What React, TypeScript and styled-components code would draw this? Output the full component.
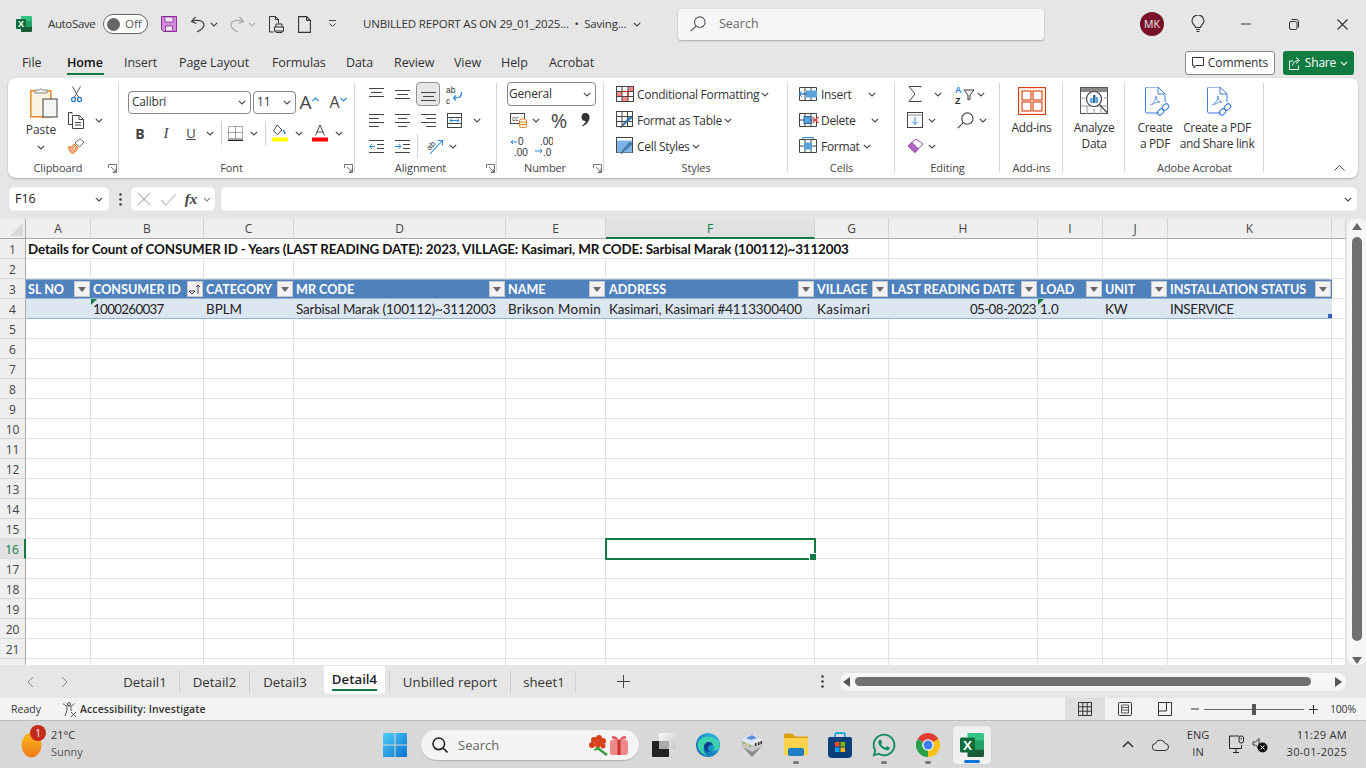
import React from "react";
import styled, { createGlobalStyle } from "styled-components";
import { FaWhatsapp } from "react-icons/fa";

const UI = `"Open Sans", "Noto Sans", sans-serif`;
const CELL = `Lato, "Open Sans", sans-serif`;

const Global = createGlobalStyle`
  html, body { margin: 0; padding: 0; background: #e6e6e6; overflow: hidden; }
  * { box-sizing: border-box; }
  svg { display: block; flex: none; }
`;

const Page = styled.div`
  width: 1366px; height: 768px; display: flex; flex-direction: column;
  background: #e6e6e6; font: 12px/16px ${UI}; color: #333; overflow: hidden;
`;

/* generic row slot for toolbar pieces */
const Slot = styled.div<{ $w: number; $l?: number }>`
  width: ${p => p.$w}px; margin-left: ${p => p.$l ?? 0}px; height: 100%;
  display: flex; align-items: center; justify-content: center; flex: none;
`;

/* ---------- title bar ---------- */
const TitleBar = styled.header`height: 48px; display: flex; align-items: center; padding-left: 16px; flex: none;`;
const AutoSave = styled.span`width: 48px; margin-left: 16px; flex: none; font-size: 11.5px; white-space: nowrap; letter-spacing: -0.35px;`;
const Toggle = styled.div`
  width: 45px; height: 20px; margin-left: 7px; border: 1.5px solid #666; border-radius: 10px; background: #fff;
  display: flex; align-items: center; padding-left: 3px; gap: 5px; font-size: 11.5px; color: #555; flex: none;
`;
const Knob = styled.i`width: 13px; height: 13px; border-radius: 50%; background: #666; display: block;`;
const DocTitle = styled.div`
  width: 265px; margin-left: 17px; flex: none; font-size: 11.5px; white-space: nowrap; overflow: hidden; letter-spacing: -0.18px; color: #333;
`;
const TitleSearch = styled.div`
  width: 366px; height: 31px; margin-left: 36px; background: #f6f6f6; border-radius: 3px; box-shadow: 0 1px 2px #aaa;
  display: flex; align-items: center; padding-left: 12px; gap: 13px; color: #666; font-size: 12.5px; flex: none;
`;
const Avatar = styled.div`
  width: 24px; height: 24px; border-radius: 50%; background: #7a0f2a; color: #eee; font-size: 10.5px; margin-left: 96px;
  display: flex; align-items: center; justify-content: center; flex: none;
`;

/* ---------- ribbon tabs ---------- */
const TabsRow = styled.nav`height: 30px; display: flex; align-items: center; padding-left: 22px; flex: none;`;
const RibbonTab = styled.span<{ $w: number; $active?: boolean }>`
  width: ${p => p.$w}px; height: 30px; line-height: 30px; flex: none; position: relative; white-space: nowrap; font-size: 12.5px; letter-spacing: -0.08px;
  color: ${p => (p.$active ? "#111" : "#333")}; font-weight: ${p => (p.$active ? 600 : 400)};
  &::after { content: ""; display: ${p => (p.$active ? "block" : "none")}; position: absolute; left: 0; top: 25px; width: 37px; height: 2px; background: #107c41; }
`;
const Comments = styled.div`
  width: 90px; height: 24px; margin-left: 590px; border: 1px solid #8a8a8a; border-radius: 3px; background: #fff;
  display: flex; align-items: center; justify-content: center; gap: 4px; font-size: 12px; letter-spacing: -0.1px; flex: none;
`;
const Share = styled.div`
  width: 71px; height: 24px; margin-left: 8px; border-radius: 3px; background: #107c41; color: #fff;
  display: flex; align-items: center; justify-content: center; gap: 4px; font-size: 12px; letter-spacing: -0.2px; flex: none;
`;

/* ---------- ribbon ---------- */
const Ribbon = styled.section`
  width: 1350px; height: 100px; margin-left: 8px; padding-top: 3px; background: #fff; border-radius: 8px;
  box-shadow: 0 1px 2px rgba(0,0,0,.25); display: flex; flex: none;
`;
const Group = styled.div<{ $w: number }>`
  width: ${p => p.$w}px; height: 95px; flex: none; display: flex; flex-direction: column; position: relative;
  &::after { content: ""; position: absolute; right: 0; top: 2px; bottom: 4px; width: 1px; background: #d4d4d4; }
`;
const GroupBody = styled.div<{ $pl?: number }>`flex: 1; min-height: 0; padding-left: ${p => p.$pl ?? 0}px; display: flex; flex-direction: column;`;
const GroupFoot = styled.div`height: 16px; display: flex; align-items: center; flex: none;`;
const LauncherSlot = styled.span`margin-right: 2px; flex: none;`;
const GroupLabel = styled.span`flex: 1; text-align: center; font-size: 11px; letter-spacing: -0.1px; color: #444; white-space: nowrap;`;
const ToolRow = styled.div<{ $h?: number }>`height: ${p => p.$h ?? 26}px; display: flex; align-items: center; flex: none;`;
const BodyRows = styled.div`display: flex; align-items: stretch; height: 78px;`;
const PasteCol = styled.div`width: 38px; margin-left: 14px; padding-top: 5px; display: flex; flex-direction: column; align-items: center; font-size: 12px; flex: none;`;
const PasteGlyph = styled.div`margin-left: 5px;`;
const PasteLabel = styled.span`margin-top: 4px; line-height: 16px;`;
const PasteChev = styled.div`margin-top: 7px;`;
const ColStack = styled.div`display: flex; flex-direction: column;`;
const Select = styled.div<{ $w: number; $h?: number; $l?: number; $pl?: number }>`
  width: ${p => p.$w}px; height: ${p => p.$h ?? 23}px; margin-left: ${p => p.$l ?? 0}px; border: 1px solid #8a8a8a; border-radius: 4px;
  display: flex; align-items: center; justify-content: space-between; padding: 0 4px 0 ${p => p.$pl ?? 3}px; font-size: 12px; color: #333; flex: none; background: #fff; letter-spacing: -0.2px;
`;
const Vert = styled.i`display: block; width: 1px; height: 24px; background: #d0d0d0;`;
const BoldGlyph = styled.span<{ $i?: boolean; $u?: boolean; $b?: boolean; $s?: number }>`
  font: ${p => (p.$i ? "italic " : "")}${p => (p.$b ? "bold " : "")}${p => p.$s ?? 14}px ${p => (p.$i ? `"Liberation Serif", serif` : UI)};
  text-decoration: ${p => (p.$u ? "underline" : "none")}; color: #444;
`;
const GrowRow = styled.div`display: flex; align-items: flex-start; height: 11px;`;
const PressedSlot = styled(Slot)`height: 24px; background: #e6e6e6; border: 1px solid #8f8f8f; border-radius: 4px;`;
const ToolText = styled.span<{ $w?: number; $l?: number }>`
  ${p => (p.$w ? `width: ${p.$w}px;` : "")} margin-left: ${p => p.$l ?? 0}px; padding-top: 2px; font-size: 12px; letter-spacing: -0.3px; white-space: nowrap; flex: none; color: #333;
`;
const BigTool = styled.div<{ $w: number }>`
  width: ${p => p.$w}px; flex: none; padding-top: 6px; display: flex; flex-direction: column; align-items: center; text-align: center; font-size: 12px; line-height: 16px; letter-spacing: -0.35px; color: #333; white-space: nowrap;
`;
const PdfGlyph = styled.div`margin-left: 6px;`;
const BigText = styled.span<{ $t?: number }>`margin-top: ${p => p.$t ?? 3}px;`;
const BigRow = styled.div`display: flex;`;
const Collapse = styled.div`margin-left: 70px; align-self: flex-end; margin-bottom: 7px;`;

/* ---------- formula bar ---------- */
const FormulaBar = styled.div`height: 24px; margin-top: 9px; display: flex; align-items: stretch; flex: none;`;
const FieldBox = styled.div<{ $w: number; $l: number }>`
  width: ${p => p.$w}px; margin-left: ${p => p.$l}px; background: #fff; border-radius: 4px; box-shadow: 0 0 1px #aaa;
  display: flex; align-items: center; flex: none; font-size: 12.5px; color: #222;
`;
const FormulaInput = styled(FieldBox)`justify-content: flex-end; padding-right: 5px;`;
const NameText = styled.span`flex: 1; padding-left: 6px;`;
const FxText = styled.span`font: italic bold 15px "Liberation Serif", serif; color: #444;`;

/* ---------- sheet ---------- */
const SheetWrap = styled.div`height: 446px; margin-top: 8px; display: flex; flex: none;`;
const Sheet = styled.div`
  width: 1346px; height: 446px; overflow: hidden; display: grid; background: #fff;
  grid-template-columns: 26px 65px 113px 90px 212px 100px 209px 74px 149px 65px 65px 164px 14px;
  grid-auto-rows: 20px; font: 13.4px/21px ${CELL}; color: #222; flex: none;
`;
const Corner = styled.div`
  background: #efefef; border-right: 1px solid #aaa; border-bottom: 1px solid #aaa; position: relative;
  &::after { content: ""; position: absolute; right: 2px; bottom: 2px; border-style: solid; border-width: 0 0 13px 13px; border-color: transparent transparent #d8d8d8 transparent; }
`;
const ColHead = styled.div<{ $sel?: boolean }>`
  background: ${p => (p.$sel ? "#e1e1e1" : "#efefef")}; color: ${p => (p.$sel ? "#107c41" : "#444")};
  border-right: 1px solid #d4d4d4; border-bottom: ${p => (p.$sel ? "2px solid #107c41" : "1px solid #aaa")};
  display: flex; align-items: center; justify-content: center; font: 12px ${UI};
`;
const RowHead = styled.div<{ $sel?: boolean }>`
  background: ${p => (p.$sel ? "#e1e1e1" : "#efefef")}; color: ${p => (p.$sel ? "#107c41" : "#444")};
  border-right: ${p => (p.$sel ? "2px solid #107c41" : "1px solid #aaa")}; border-bottom: 1px solid #d8d8d8; padding-top: 2px;
  display: flex; align-items: center; justify-content: center; font: 12px ${UI};
`;
const Cell = styled.div<{ $span?: number }>`
  ${p => (p.$span ? `grid-column: span ${p.$span};` : "")}
  border-right: 1px solid #e2e2e2; border-bottom: 1px solid #e2e2e2; padding: 0 2px; white-space: nowrap; position: relative;
`;
const TitleCell = styled(Cell)`font-weight: 700; letter-spacing: -0.12px; color: #111;`;
const Blank = styled(Cell)<{ $sel?: boolean }>`
  ${p => p.$sel ? `outline: 2px solid #107c41; outline-offset: -1px; z-index: 2;
    &::after { content: ""; position: absolute; right: -3px; bottom: -3px; width: 6px; height: 6px; background: #107c41; border: 1px solid #fff; }` : ""}
`;
const HeadCell = styled.div<{ $pl: number }>`
  background: #4f81bd; color: #fff; font-weight: 700; display: flex; align-items: center; justify-content: space-between; padding: 0 1px 0 ${p => p.$pl}px; white-space: nowrap;
  border-top: 1px solid #95b3d7; border-bottom: 1px solid #95b3d7; font-size: 12.6px;
`;
const FilterBtn = styled.span`
  width: 16px; height: 16px; background: #f2f2f2; border: 1px solid #c8c8c8; display: flex; align-items: center; justify-content: center; flex: none;
`;
const DataCell = styled.div<{ $right?: boolean; $flag?: boolean; $end?: boolean; $ls: number; $pl: number }>`
  background: #dce6f1; border-bottom: 1px solid #95b3d7; padding: 0 2px 0 ${p => p.$pl}px; white-space: nowrap; position: relative; text-align: ${p => (p.$right ? "right" : "left")}; color: #222;
  letter-spacing: ${p => p.$ls}px;
  ${p => p.$flag ? `&::before { content: ""; position: absolute; left: 0; top: 0; border-style: solid; border-width: 6px 6px 0 0; border-color: #107c41 transparent transparent transparent; }` : ""}
  ${p => p.$end ? `&::after { content: ""; position: absolute; right: 0; bottom: 0; width: 4px; height: 4px; background: #3b5fb5; }` : ""}
`;
const VScroll = styled.div`
  width: 20px; display: flex; flex-direction: column; align-items: center; background: #f6f6f6; border-radius: 8px; margin-left: 1px; padding: 4px 0; flex: none;
`;
const VThumb = styled.div`width: 10px; height: 404px; margin-top: 7px; background: #707070; border-radius: 5px; flex: none;`;
const VArrowEnd = styled.div`margin-top: 16px;`;

/* ---------- sheet tabs ---------- */
const TabBar = styled.div`height: 33px; display: flex; align-items: center; padding-left: 27px; flex: none;`;
const SheetTab = styled.span<{ $w: number; $sep?: boolean; $sepL?: boolean; $l?: number; $pl?: number }>`
  width: ${p => p.$w}px; margin-left: ${p => p.$l ?? 0}px; padding-left: ${p => p.$pl ?? 0}px; height: 22px; display: flex; align-items: center; justify-content: center; flex: none; white-space: nowrap; font-size: 13.2px; letter-spacing: 0.05px; color: #333;
  border-right: ${p => (p.$sep ? "1px solid #cfcfcf" : "0")}; border-left: ${p => (p.$sepL ? "1px solid #cfcfcf" : "0")};
`;
const ActiveTab = styled.span`
  width: 61px; height: 28px; margin: -3px 4px 0 4px; background: #fff; border-radius: 0 0 5px 5px; display: flex; flex-direction: column; align-items: center; justify-content: flex-start; flex: none;
  font-size: 13.2px; font-weight: 600; letter-spacing: 0.05px; color: #222; padding-top: 5px;
`;
const ActiveLine = styled.i`display: block; width: 45px; height: 2px; background: #107c41; margin-top: 2px;`;
const HScroll = styled.div`
  width: 506px; height: 18px; margin-left: 16px; background: #f6f6f6; border-radius: 8px; display: flex; align-items: center; padding: 0 3px; flex: none;
`;
const HThumb = styled.div`width: 456px; height: 9px; margin-left: 5px; background: #707070; border-radius: 5px; flex: none;`;
const HEnd = styled.div`margin-left: 24px;`;

/* ---------- status bar ---------- */
const StatusBar = styled.footer`height: 22px; background: #f3f3f3; display: flex; align-items: center; padding-left: 11px; font-size: 10.5px; flex: none; color: #333;`;
const Ready = styled.span`width: 51px; flex: none;`;
const A11y = styled.span`margin-left: 3px; width: 985px; font-weight: 600; letter-spacing: 0.1px; color: #333; flex: none;`;
const ViewBtn = styled.div<{ $on?: boolean }>`width: 40px; height: 22px; background: ${p => (p.$on ? "#dedede" : "transparent")}; display: flex; align-items: center; justify-content: center; flex: none;`;
const SliderTrack = styled.div`width: 100px; height: 1px; background: #666; display: flex; align-items: center; justify-content: center; flex: none;`;
const SliderThumb = styled.i`width: 4px; height: 11px; background: #555; display: block;`;
const Percent = styled.span`margin-left: 12px; font-size: 10.5px; letter-spacing: -0.2px;`;

/* ---------- taskbar ---------- */
const Taskbar = styled.div`height: 48px; background: #d8d8d8; border-top: 1px solid #bcbcbc; display: flex; align-items: center; padding-left: 21px; flex: none;`;
const Weather = styled.div`width: 30px; height: 30px; position: relative; flex: none; display: flex; align-items: center;`;
const Badge = styled.span`
  position: absolute; left: 9px; top: -5px; width: 16px; height: 16px; border-radius: 50%; background: #c42b1c; color: #fff; font-size: 10px; line-height: 16px; text-align: center;
`;
const WeatherText = styled.div`width: 332px; font-size: 11px; line-height: 17px; color: #333; flex: none; padding-bottom: 4px;`;
const WeatherSub = styled.div`color: #555;`;
const WinSearch = styled.div`
  width: 218px; height: 30px; margin-left: 14px; background: #f4f4f4; border-radius: 15px; box-shadow: 0 1px 1px #b0b0b0;
  display: flex; align-items: center; padding: 0 9px 0 11px; gap: 10px; font-size: 13px; color: #666; flex: none;
`;
const SearchGrow = styled.span`flex: 1;`;
const TaskIcon = styled.div<{ $dot?: boolean; $active?: boolean; $l?: number }>`
  width: ${p => (p.$active ? 38 : 44)}px; height: 38px; margin: ${p => (p.$active ? "0 3px" : `0 0 0 ${p.$l ?? 0}px`)}; flex: none; position: relative; display: flex; align-items: center; justify-content: center;
  ${p => p.$active ? "background:#f0f0f0; border-radius:4px; box-shadow: 0 0 1px #bbb;" : ""}
  ${p => p.$dot ? `&::after { content: ""; position: absolute; left: 50%; margin-left: -3px; bottom: 0; width: 6px; height: 3px; border-radius: 2px; background: #777; }` : ""}
  ${p => p.$active ? `&::after { content: ""; position: absolute; left: 50%; margin-left: -8px; bottom: 1px; width: 16px; height: 3px; border-radius: 2px; background: #0a74d4; }` : ""}
`;
const TrayText = styled.div`width: 30px; text-align: center; font-size: 11px; line-height: 17px; flex: none; margin-left: 14px; color: #333; padding-bottom: 3px;`;
const Clock = styled.div`width: 73px; margin-left: 6px; text-align: right; font-size: 11px; line-height: 17px; flex: none; color: #333; letter-spacing: 0.3px; padding-bottom: 4px;`;

/* ---------- icons ---------- */
const Chev = ({ c = "#444" }: { c?: string }) => (
  <svg width="8" height="5" viewBox="0 0 8 5"><path d="M.8.8 4 4 7.2.8" fill="none" stroke={c} strokeWidth="1.1" /></svg>
);
const Launcher = () => (
  <svg width="9" height="9" viewBox="0 0 9 9"><path d="M.5 4V.5h8v8H5M3 3l5 5M8 4.5V8H4.5" fill="none" stroke="#666" strokeWidth=".9" /></svg>
);
const XlLogo = ({ s = 16 }: { s?: number }) => (
  <svg width={s} height={s} viewBox="0 0 16 16">
    <path d="M5 0h10a1 1 0 0 1 1 1v4H5z" fill="#33c481" /><path d="M5 5h11v6H5z" fill="#107c41" /><path d="M10 5h6v6h-6z" fill="#21a366" />
    <path d="M5 11h11v4a1 1 0 0 1-1 1H5z" fill="#185c37" />
    <rect x="0" y="3" width="10" height="10" rx="1" fill="#0f6b3a" />
    <text x="5" y="11.3" textAnchor="middle" fontFamily="Liberation Sans" fontWeight="700" fontSize="9" fill="#fff">X</text>
  </svg>
);
const SaveIcon = () => (
  <svg width="16" height="16" viewBox="0 0 16 16">
    <path d="M.5.5h15v15H2.5l-2-2z" fill="#cf8fd8" stroke="#8a2e9a" /><rect x="4" y="1" width="8" height="5" fill="#f5e8f7" stroke="#8a2e9a" strokeWidth=".8" /><rect x="4.5" y="10" width="7" height="5" fill="#f5e8f7" stroke="#8a2e9a" strokeWidth=".8" />
  </svg>
);
const Undo = ({ c, flip }: { c: string; flip?: boolean }) => (
  <svg width="16" height="17" viewBox="0 0 16 17">
    <g transform={flip ? "translate(16 0) scale(-1 1)" : undefined}>
      <path d="M5.5 1 1.5 5.5l5 2M1.8 5.5C6 3.5 14 4 14 9c0 3-3 5-7 7" fill="none" stroke={c} strokeWidth="1.2" />
    </g>
  </svg>
);
const PrintPrev = () => (
  <svg width="15" height="17" viewBox="0 0 15 17" fill="none" stroke="#333" strokeWidth="1"><path d="M.5.5h6l3 3v4M6.5.5v3h3M.5.5v15.5h4" /><rect x="5.5" y="11" width="9" height="4" /><path d="M7 11V8h6v3M7 15v1.5h6V15" /></svg>
);
const NewDoc = () => (
  <svg width="13" height="17" viewBox="0 0 13 17" fill="none" stroke="#333" strokeWidth="1.1"><path d="M.6.6h8l3.8 3.8v12H.6zM8.6.6v3.8h3.8" /></svg>
);
const Customize = () => (
  <svg width="9" height="8" viewBox="0 0 9 8" fill="none" stroke="#444"><path d="M1 .5h7M1.5 3.5 4.5 6.5 7.5 3.5" /></svg>
);
const Magnifier = ({ s = 16, c = "#555" }: { s?: number; c?: string }) => (
  <svg width={s} height={s} viewBox="0 0 16 16" fill="none" stroke={c} strokeWidth="1.1"><circle cx="9.8" cy="6.2" r="5.3" /><path d="M6 10 .8 15.2" /></svg>
);
const Bulb = () => (
  <svg width="14" height="18" viewBox="0 0 14 18" fill="none" stroke="#333" strokeWidth="1.1"><path d="M4.5 12.5C4.5 10 1 9 1 6a6 6 0 0 1 12 0c0 3-3.500 4-3.500 6.500zM5 14.500h4M5.500 16.500h3" /></svg>
);
const WinMin = () => <svg width="10" height="2" viewBox="0 0 10 2"><path d="M0 1h10" stroke="#333" /></svg>;
const WinRestore = () => <svg width="10" height="11" viewBox="0 0 10 11" fill="none" stroke="#333"><rect x=".5" y="2.500" width="7.500" height="8" rx="1.500" /><path d="M2.500.5h5A2 2 0 0 1 9.500 2.500v6" /></svg>;
const WinClose = () => <svg width="11" height="11" viewBox="0 0 11 11" stroke="#333" strokeWidth="1.100"><path d="m.5.5 10 10M10.500.5l-10 10" /></svg>;
const CommentIco = () => <svg width="12" height="12" viewBox="0 0 12 12" fill="none" stroke="#333"><path d="M.5.5h11v8H4L2 11V8.500H.5z" /></svg>;
const ShareIco = () => <svg width="12" height="13" viewBox="0 0 12 13" fill="none" stroke="#fff"><path d="M4 4H.5v8.500h9V8.500M3.500 8.500C4 5.500 6.500 3.500 9 3.500M7 .5l3.500 3L7 6.500" /></svg>;

const PasteIco = () => (
  <svg width="28" height="32" viewBox="0 0 28 32">
    <rect x=".8" y="4.800" width="20" height="26" fill="#fdf3e2" stroke="#e8912d" strokeWidth="1.600" />
    <path d="M5 7V4h4a2.500 2.500 0 0 1 4 0h4v3z" fill="#f2f2f2" stroke="#888" />
    <rect x="13" y="13" width="14" height="18" fill="#f5f5f5" stroke="#444" />
  </svg>
);
const CutIco = () => (
  <svg width="11" height="17" viewBox="0 0 11 17" fill="none"><path d="M1.500.5 7.500 11M9.500.5 3.500 11" stroke="#555" /><circle cx="2.500" cy="13.500" r="2" stroke="#2a7cc7" strokeWidth="1.300" /><circle cx="8.500" cy="13.500" r="2" stroke="#2a7cc7" strokeWidth="1.300" /></svg>
);
const CopyIco = () => (
  <svg width="16" height="17" viewBox="0 0 16 17" fill="none" stroke="#444"><path d="M4 2V.5H.5v12H4" /><path d="M4.500 3.500h7l4 4v9h-11zM11 3.500v4h4.500M7 10.500h6M7 13h6" /></svg>
);
const PainterIco = () => (
  <svg width="18" height="16" viewBox="0 0 18 16"><path d="M1 9c3 .5 5-1 6-3l4 4c-1.500 3-4 5-6 5.500-.5-1-1-1.500-2-2-.5-1.500-1-3-2-4.500z" fill="#f4b183" stroke="#e07a1f" /><path d="m8 5 5-4.500 4 3.500-4.500 5z" fill="#fff" stroke="#666" /></svg>
);
const Caret = ({ down, c = "#2b88d8" }: { down?: boolean; c?: string }) => (
  <svg width="7" height="5" viewBox="0 0 7 5" fill="none" stroke={c} strokeWidth="1.200"><path d={down ? "M.5 1l3 3 3-3" : "M.5 4l3-3 3 3"} /></svg>
);
const BorderIco = () => (
  <svg width="15" height="15" viewBox="0 0 15 15" fill="none" stroke="#555"><path d="M.5.5h14v12H.5z" strokeDasharray="1 1" /><path d="M7.500.5v12M.5 6.500h14" strokeDasharray="1 1" /><path d="M0 14.300h15" stroke="#111" strokeWidth="1.300" /></svg>
);
const FillIco = () => (
  <svg width="16" height="18" viewBox="0 0 16 18"><path d="M5 1 1.500 7l4 3.500L10 6z" fill="none" stroke="#444" /><path d="M11 6c1.500 1 2 2.500 1.500 4" fill="none" stroke="#2b88d8" strokeWidth="1.500" /><rect y="13.500" width="16" height="4" fill="#ffff00" /></svg>
);
const FontColorIco = () => (
  <svg width="16" height="18" viewBox="0 0 16 18"><path d="M3.500 11.500 8 1l4.500 10.500M5 8h6" fill="none" stroke="#444" /><rect y="13.500" width="16" height="4" fill="#f00" /></svg>
);
const Lines = ({ rows }: { rows: [number, number, number][] }) => (
  <svg width="15" height="15" viewBox="0 0 15 15" stroke="#444">
    {rows.map((r, i) => <path key={i} d={`M${r[0]} ${r[2]}.5H${r[1]}`} />)}
  </svg>
);
const WrapIco = () => (
  <svg width="18" height="21" viewBox="0 0 18 21"><text x="1" y="9" fontFamily="Liberation Sans" fontSize="8.500" fill="#333">ab</text><text x="1" y="19.500" fontFamily="Liberation Sans" fontSize="8.500" fill="#333">c</text><path d="M16.500 8c0 6-3 6-8 6M11 11.500 8.500 14l2.500 2.500" fill="none" stroke="#2b88d8" strokeWidth="1.200" /></svg>
);
const MergeIco = () => (
  <svg width="15" height="15" viewBox="0 0 15 15" fill="none"><rect x=".5" y=".5" width="14" height="14" stroke="#444" /><path d="M.5 4.500h14M.5 10.500h14" stroke="#444" /><path d="M3 7.500h9M5 5.500l-2 2 2 2M10 5.500l2 2-2 2" stroke="#2b88d8" /></svg>
);
const Indent = ({ out }: { out?: boolean }) => (
  <svg width="15" height="13" viewBox="0 0 15 13" fill="none"><path d="M0 .5h15M8 4.500h7M8 8.500h7M0 12.500h15" stroke="#444" /><path d={out ? "M6 6.500H.8M3 4 .8 6.500 3 9" : "M0 6.500h5.500M3.500 4 6 6.500 3.500 9"} stroke="#2b88d8" /></svg>
);
const OrientIco = () => (
  <svg width="22" height="20" viewBox="0 0 22 20"><text x="2" y="12" transform="rotate(-45 7 9)" fontFamily="Liberation Sans" fontSize="8" fill="#333">ab</text><path d="M6 18 18 5M13.500 4.500H18.500V9.500" fill="none" stroke="#2b88d8" strokeWidth="1.100" /></svg>
);
const CurrencyIco = () => (
  <svg width="17" height="15" viewBox="0 0 17 15"><rect x=".5" y=".5" width="14" height="10" fill="#fff" stroke="#444" /><text x="2" y="8" fontFamily="Liberation Sans" fontSize="6.500" fill="#333">cc</text><rect x="9.500" y="6" width="7" height="8.500" rx="2" fill="#fff" stroke="#e07a1f" /><path d="M9.500 9h7M9.500 11.500h7" stroke="#e07a1f" /></svg>
);
const CommaIco = () => (
  <svg width="9" height="14" viewBox="0 0 9 14"><path d="M4 0c3 0 5 2 4.500 5C8 9 5 12 1.500 13.500l-.5-.8C3 11 4.500 9.500 4.500 8 2 8 .5 6.500.5 4S2 0 4 0z" fill="#333" /></svg>
);
const DecPlaces = ({ more }: { more?: boolean }) => (
  <svg width="20" height="21" viewBox="0 0 20 21"><text x={more ? 7 : 10} y="9" fontFamily="Liberation Sans" fontSize="10" fill="#333">{more ? ".00" : "0"}</text><text x={more ? 10 : 6} y="20" fontFamily="Liberation Sans" fontSize="10" fill="#333">{more ? ".0" : ".00"}</text><path d={more ? "M2 15h7M7 13l2 2-2 2" : "M3 6h6M5 4 3 6l2 2"} fill="none" stroke="#2b88d8" /></svg>
);
const CondIco = () => (
  <svg width="18" height="16" viewBox="0 0 18 16" fill="none"><rect x=".5" y=".5" width="17" height="15" stroke="#444" /><rect x="6" y="1" width="6" height="4.500" fill="#fff" /><rect x="12" y="1" width="5" height="4.500" fill="#f88" /><rect x="6" y="10" width="6" height="5" fill="#f88" /><rect x="1" y="5.500" width="5" height="4.500" fill="#f88" /><path d="M6 .5v15M12 .5v15M.5 5.500h17M.5 10.500h17" stroke="#444" /><path d="M6 5.500h6v5" stroke="#e00" /></svg>
);
const TableIco = ({ fill }: { fill?: boolean }) => (
  <svg width="18" height="18" viewBox="0 0 18 18" fill="none"><rect x=".5" y=".5" width="16" height="15" stroke="#444" />{fill ? <rect x="1" y="3.500" width="15" height="12" fill="#7db5e6" /> : <path d="M.5 5.500h16M.5 10.500h16M6 .5v15M11.500 .5v15" stroke="#444" />}<path d="m5 17 2-4 7-8 2 2-8 7z" fill="#2b88d8" stroke="#555" strokeWidth=".7" /></svg>
);
const CellGridIco = ({ kind }: { kind: "insert" | "delete" | "format" }) => (
  <svg width="22" height="18" viewBox="0 0 22 18" fill="none">
    <path d="M1.500 2.500h17v13h-17zM1.500 9h17M7 2.500v13M13 2.500v13" stroke="#444" />
    {kind === "insert" && <><rect x="8" y="5.500" width="11" height="7" fill="#5ba3dd" /><path d="M9 9H1M4 6 1 9l3 3" stroke="#2b88d8" fill="none" /></>}
    {kind === "delete" && <><rect x="6" y="5.500" width="7" height="7" fill="#5ba3dd" stroke="#2b6ca8" /><path d="m14.500 6 6 6M20.500 6l-6 6" stroke="#e44" strokeWidth="1.300" /></>}
    {kind === "format" && <><rect x="6" y="5.500" width="8" height="7" fill="#5ba3dd" /><path d="M5 .5h10M5 0v2M15 0v2" stroke="#2b88d8" /></>}
  </svg>
);
const SigmaIco = () => <svg width="14" height="16" viewBox="0 0 14 16" fill="none" stroke="#444"><path d="M13 1.500V.5H1l6 7.500-6 7.500h12v-1" /></svg>;
const SortIco = () => (
  <svg width="20" height="21" viewBox="0 0 20 21"><text x="0" y="9" fontFamily="Liberation Sans" fontWeight="700" fontSize="9" fill="#2b88d8">A</text><text x="0" y="19.500" fontFamily="Liberation Sans" fontWeight="700" fontSize="9" fill="#333">Z</text><path d="M9 6h10l-4 5v4l-2 1v-5z" fill="none" stroke="#333" /></svg>
);
const FillDown = () => <svg width="16" height="16" viewBox="0 0 16 16" fill="none"><rect x=".5" y=".5" width="15" height="15" stroke="#444" /><path d="M.5 3h15" stroke="#888" /><path d="M8 5v7M5 9.500 8 12.500l3-3" stroke="#2b88d8" /></svg>;
const Eraser = () => <svg width="17" height="16" viewBox="0 0 17 16"><path d="M1 8 9 1l7 5-8 8.500z" fill="#fff" stroke="#9c4fb0" /><path d="M1 8l4-3.500 6 6L8 14.500z" fill="#b565c8" stroke="#9c4fb0" /></svg>;
const AddinsIco = () => (
  <svg width="28" height="28" viewBox="0 0 28 28" fill="none" stroke="#d83b01" strokeWidth="1.100"><rect x=".6" y=".6" width="26.800" height="26.800" /><rect x="4" y="4" width="9" height="9" /><rect x="15" y="4" width="9" height="9" /><rect x="4" y="15" width="9" height="9" /><rect x="15" y="15" width="9" height="9" /></svg>
);
const AnalyzeIco = () => (
  <svg width="29" height="28" viewBox="0 0 29 28" fill="none">
    <rect x=".5" y=".5" width="27" height="26" stroke="#555" /><rect x="1" y="1" width="26" height="4" fill="#8a8a8a" />
    <path d="M.5 11h5M.5 19h27M7 19v8M14 22v5M21 19v8M24 11h4" stroke="#999" />
    <circle cx="14" cy="12" r="7.500" fill="#fff" stroke="#444" strokeWidth="1.200" /><path d="m19.500 17.500 8 8.500" stroke="#555" strokeWidth="1.400" />
    <rect x="10" y="11" width="2.500" height="5" fill="#5ba3dd" /><rect x="13" y="8" width="2.500" height="8" fill="#2b6ca8" /><rect x="16" y="10" width="2" height="6" fill="#5ba3dd" />
  </svg>
);
const PdfIco = () => (
  <svg width="26" height="30" viewBox="0 0 26 30" fill="none" stroke="#3b7ddd" strokeWidth="1"><path d="M14 26H2a1.500 1.500 0 0 1-1.500-1.500v-23A1.500 1.500 0 0 1 2 0h11l7 7v8M13 0v7h7" /><path d="M5 18c3-1 6-5 6-9 0 3 2 6 4 6-3 0-6 1-8 3" strokeWidth=".8" /><rect x="12" y="22.500" width="7" height="5" rx="2.500" transform="rotate(-45 15.500 25)" /><rect x="17" y="17.500" width="7" height="5" rx="2.500" transform="rotate(-45 20.500 20)" /></svg>
);
const TriV = ({ up }: { up?: boolean }) => (
  <svg width="10" height="7" viewBox="0 0 10 7"><path d={up ? "M5 0l5 7H0z" : "M0 0h10L5 7z"} fill="#666" /></svg>
);
const TriH = ({ left }: { left?: boolean }) => (
  <svg width="7" height="10" viewBox="0 0 7 10"><path d={left ? "M7 0v10L0 5z" : "M0 0l7 5-7 5z"} fill="#555" /></svg>
);
const NavArrow = ({ left }: { left?: boolean }) => (
  <svg width="7" height="12" viewBox="0 0 7 12" fill="none" stroke="#888"><path d={left ? "M6 1 1 6l5 5" : "M1 1l5 5-5 5"} /></svg>
);
const Dots = ({ c = "#333" }: { c?: string }) => (
  <svg width="3" height="13" viewBox="0 0 3 13" fill={c}><circle cx="1.500" cy="1.500" r="1.200" /><circle cx="1.500" cy="6.500" r="1.200" /><circle cx="1.500" cy="11.500" r="1.200" /></svg>
);
const XMark = () => <svg width="16" height="16" viewBox="0 0 16 16" stroke="#bbb" strokeWidth="1.100"><path d="m2 2 12 12M14 2 2 14" /></svg>;
const Check = () => <svg width="17" height="13" viewBox="0 0 17 13" fill="none" stroke="#bbb" strokeWidth="1.100"><path d="m1 7 5 5L16 1" /></svg>;
const Plus = () => <svg width="13" height="13" viewBox="0 0 13 13" stroke="#444"><path d="M6.500 0v13M0 6.500h13" /></svg>;
const A11yIco = () => (
  <svg width="15" height="15" viewBox="0 0 15 15" fill="none" stroke="#444" strokeWidth=".9"><circle cx="7" cy="2" r="1.500" /><path d="M1 1.500c2 2 3 2.500 6 2.500s3.500-.5 5.500-2.500M5 4.500V8l-2 6M9 4.500V8l.5 1" /><path d="m9 10 5 5M14 10l-5 5" /></svg>
);
const GridView = () => <svg width="14" height="14" viewBox="0 0 14 14" fill="none" stroke="#333"><path d="M.5.5h13v13H.5zM.5 4.800h13M.5 9.200h13M4.800.5v13M9.200.5v13" /></svg>;
const PageView = () => <svg width="14" height="14" viewBox="0 0 14 14" fill="none" stroke="#333"><rect x=".5" y=".5" width="13" height="13" rx="1" /><path d="M3.500 3h7v8h-7zM3.500 5.500h7M3.500 8h7" strokeWidth=".8" /></svg>;
const BreakView = () => <svg width="14" height="14" viewBox="0 0 14 14" fill="none" stroke="#333"><path d="M.5.5h13v13H.5zM.5 9h8V.5" /></svg>;
const Minus = () => <svg width="8" height="2" viewBox="0 0 8 2"><path d="M0 1h8" stroke="#333" /></svg>;
const PlusSm = () => <svg width="9" height="9" viewBox="0 0 9 9" stroke="#333"><path d="M4.500 0v9M0 4.500h9" /></svg>;

const SunIco = () => (
  <svg width="21" height="26" viewBox="0 0 21 26"><defs><linearGradient id="sun" x1="0" y1="0" x2="0" y2="1"><stop offset="0" stopColor="#f8b81c" /><stop offset="1" stopColor="#ef7a1a" /></linearGradient></defs><ellipse cx="10.500" cy="13" rx="10" ry="12.500" fill="url(#sun)" /></svg>
);
const WinLogo = () => (
  <svg width="24" height="24" viewBox="0 0 24 24"><defs><linearGradient id="win" x1="0" y1="0" x2="1" y2="1"><stop offset="0" stopColor="#4fd1f8" /><stop offset="1" stopColor="#0a6fd0" /></linearGradient></defs><path d="M0 1a1 1 0 0 1 1-1h10.500v11.500H0zM12.500 0H23a1 1 0 0 1 1 1v10.500H12.500zM0 12.500h11.500V24H1a1 1 0 0 1-1-1zM12.500 12.500H24V23a1 1 0 0 1-1 1H12.500z" fill="url(#win)" /></svg>
);
const SearchDark = () => <svg width="16" height="16" viewBox="0 0 16 16" fill="none" stroke="#222" strokeWidth="1.600"><circle cx="6.800" cy="6.800" r="5.800" /><path d="m11 11 4.500 4.500" /></svg>;
const Gift = () => (
  <svg width="42" height="22" viewBox="0 0 42 22">
    <path d="M8 13 19 21" stroke="#3e9a3a" strokeWidth="2.500" /><path d="M6 16l6-2" stroke="#3e9a3a" strokeWidth="1.500" />
    <g fill="#d9401a"><circle cx="6" cy="6" r="3" /><circle cx="11" cy="4" r="3" /><circle cx="15" cy="7" r="3" /><circle cx="4" cy="11" r="3" /><circle cx="10" cy="10" r="3.200" /><circle cx="15" cy="12" r="2.500" /></g>
    <rect x="22" y="6" width="18" height="15" rx="2" fill="#ef8a8a" /><rect x="29.500" y="6" width="3" height="15" fill="#c9302c" /><path d="M31 6c-3-5-8-5-7-2 .5 1.500 4 2 7 2zM31 6c3-5 8-5 7-2-.5 1.500-4 2-7 2z" fill="#e05a5a" />
  </svg>
);
const TaskView = () => (
  <svg width="24" height="24" viewBox="0 0 24 24"><defs><linearGradient id="tv" x1="0" y1="0" x2="1" y2="1"><stop offset="0" stopColor="#fafafa" /><stop offset="1" stopColor="#c8c8c8" /></linearGradient></defs><rect x="0" y="8" width="17" height="16" rx="1" fill="#222" /><rect x="7" y="0" width="17" height="16" rx="1" fill="url(#tv)" /><path d="M7 8h10v8H7z" fill="#aaa" /></svg>
);
const Edge = () => (
  <svg width="24" height="24" viewBox="0 0 24 24"><defs><linearGradient id="ed" x1="0" y1="1" x2="1" y2="0"><stop offset="0" stopColor="#0b5aa8" /><stop offset="1" stopColor="#2ec4e8" /></linearGradient></defs><circle cx="12" cy="12" r="12" fill="url(#ed)" /><path d="M2 9c3-6 13-8 19-2 2 2 3 5 2 8-1 2-5 3-8 2 3 0 4-2 3-4-2-3-8-3-10 1-1 3 0 7 4 9-6-1-12-7-10-14z" fill="#3fd0b0" /><path d="M13 9c-3 0-5 2-5 5 0 3 3 5 6 5-2-1-3-3-2-5 .5-2 3-2 5-2-1-2-2-3-4-3z" fill="#0b3f8c" /></svg>
);
const RemoteIco = () => (
  <svg width="24" height="24" viewBox="0 0 24 24"><path d="M12 17 1 12l11 12 11-12z" fill="#8a8a8a" /><path d="M1 7v6l11 6 11-6V7L12 12z" fill="#c8c8c8" /><path d="M1 7l11-6 11 6-11 5z" fill="#dfe7f2" /><path d="M6 5l6-3 5 3-6 2z" fill="#5b8fd8" /><g fill="#333"><rect x="15" y="10" width="1.500" height="3" /><rect x="18" y="9" width="1.500" height="3" /><rect x="20.500" y="8" width="1.500" height="3" /></g><g fill="#6ab04c"><circle cx="4" cy="10" r="1" /></g><circle cx="7" cy="11.500" r="1" fill="#f1c40f" /><circle cx="10" cy="13" r="1" fill="#6ab04c" /></svg>
);
const Folder = () => (
  <svg width="24" height="23" viewBox="0 0 24 23"><path d="M0 2a1.500 1.500 0 0 1 1.500-1.500H8l3 3h13V6H0z" fill="#d9a20c" /><path d="M0 5h24v16a1.500 1.500 0 0 1-1.500 1.500h-21A1.500 1.500 0 0 1 0 21z" fill="#fbd34e" /><rect x="4" y="15" width="16" height="8" rx="2" fill="#1f7fc4" /></svg>
);
const Store = () => (
  <svg width="24" height="26" viewBox="0 0 24 26"><path d="M7 6V3a2 2 0 0 1 2-2h6a2 2 0 0 1 2 2v3" fill="none" stroke="#1ea7e0" strokeWidth="1.800" /><path d="M0 7a2 2 0 0 1 2-2h20a2 2 0 0 1 2 2v15a4 4 0 0 1-4 4H4a4 4 0 0 1-4-4z" fill="#0c3f7a" /><rect x="7" y="10" width="4.500" height="4.500" fill="#f25022" /><rect x="12.500" y="10" width="4.500" height="4.500" fill="#7fba00" /><rect x="7" y="15.500" width="4.500" height="4.500" fill="#00a4ef" /><rect x="12.500" y="15.500" width="4.500" height="4.500" fill="#ffb900" /></svg>
);
const Chrome = () => (
  <svg width="24" height="24" viewBox="0 0 24 24"><path d="M12 12 1.600 6A12 12 0 0 1 22.400 6z" fill="#e33b2e" /><path d="M12 12 22.400 6A12 12 0 0 1 12 24z" fill="#fbc116" /><path d="M12 12V24A12 12 0 0 1 1.600 6z" fill="#2aa24a" /><circle cx="12" cy="12" r="5.800" fill="#fff" /><circle cx="12" cy="12" r="4.500" fill="#3d7ff0" /></svg>
);
const Up = () => <svg width="12" height="7" viewBox="0 0 12 7" fill="none" stroke="#222" strokeWidth="1.300"><path d="m1 6 5-5 5 5" /></svg>;
const CloudIco = () => <svg width="17" height="13" viewBox="0 0 17 13"><path d="M4 12.500a3.500 3.500 0 0 1-.5-7 5 5 0 0 1 9.500 0 3.500 3.500 0 0 1 0 7z" fill="#dedede" stroke="#333" /></svg>;
const NetIco = () => <svg width="16" height="19" viewBox="0 0 16 19" fill="none" stroke="#222"><path d="M10 1H.5v12.500h12V10M4 17.500h6M7 14v3.500" /><rect x="10" y="1" width="4.500" height="7" rx="2" /><path d="M12.200 3v1.500" /></svg>;
const SoundIco = () => <svg width="16" height="16" viewBox="0 0 16 16"><path d="M1 5h2.500L7 1.500v10L3.500 8H1z" fill="none" stroke="#333" /><circle cx="10.500" cy="10.500" r="5" fill="#111" /><path d="m8.500 8.500 4 4M12.500 8.500l-4 4" stroke="#fff" /></svg>;
const Funnel = () => <svg width="8" height="5" viewBox="0 0 8 5"><path d="M0 0h8L4 5z" fill="#666" /></svg>;
const SortFilter = () => <svg width="12" height="11" viewBox="0 0 12 11" fill="none" stroke="#444"><path d="M0 7h6L3 10zM9 10V1M7 3l2-2 2 2" /></svg>;

/* ---------- data ---------- */
const COLS = ["A", "B", "C", "D", "E", "F", "G", "H", "I", "J", "K"];
const HEADS = ["SL NO", "CONSUMER ID", "CATEGORY", "MR CODE", "NAME", "ADDRESS", "VILLAGE", "LAST READING DATE", "LOAD", "UNIT", "INSTALLATION STATUS"];
const DATA = ["", "1000260037", "BPLM", "Sarbisal Marak (100112)~3112003", "Brikson Momin", "Kasimari, Kasimari #4113300400", "Kasimari", "05-08-2023", "1.0", "KW", "INSERVICE"];
const DATA_SPACING = [0, -0.7, 0, -0.16, 0.3, -0.1, 0.37, -0.6, 0, 0, -0.33];
const TITLE = "Details for Count of CONSUMER ID - Years (LAST READING DATE): 2023, VILLAGE: Kasimari, MR CODE: Sarbisal Marak (100112)~3112003";
const RIBBON_TABS: [string, number][] = [["File", 45], ["Home", 57], ["Insert", 55], ["Page Layout", 93], ["Formulas", 74], ["Data", 48], ["Review", 60], ["View", 47], ["Help", 48]];

const top: [number, number, number][] = [[0, 15, 1], [2, 13, 5], [0, 15, 9]];
const mid: [number, number, number][] = [[0, 15, 3], [2, 13, 7], [0, 15, 11]];
const bot: [number, number, number][] = [[0, 15, 5], [2, 13, 9], [0, 15, 13]];
const left: [number, number, number][] = [[0, 15, 1], [0, 10, 5], [0, 15, 9], [0, 10, 13]];
const center: [number, number, number][] = [[0, 15, 1], [3, 12, 5], [0, 15, 9], [3, 12, 13]];
const right: [number, number, number][] = [[0, 15, 1], [5, 15, 5], [0, 15, 9], [5, 15, 13]];

const Foot = ({ label, launch }: { label: string; launch?: boolean }) => (
  <GroupFoot><GroupLabel>{label}</GroupLabel>{launch && <LauncherSlot><Launcher /></LauncherSlot>}</GroupFoot>
);

function SheetGrid() {
  const cells: React.ReactNode[] = [];
  cells.push(<Corner key="c" />);
  COLS.forEach(c => cells.push(<ColHead key={c} $sel={c === "F"}>{c}</ColHead>));
  cells.push(<ColHead key="end" />);
  for (let r = 1; r <= 22; r++) {
    cells.push(<RowHead key={`r${r}`} $sel={r === 16}>{r}</RowHead>);
    if (r === 1) {
      cells.push(<TitleCell key="t" $span={7}>{TITLE}</TitleCell>);
      for (let i = 7; i < 12; i++) cells.push(<Blank key={`b1-${i}`} />);
    } else if (r === 3) {
      HEADS.forEach((h, i) => cells.push(
        <HeadCell key={h} $pl={i === 5 ? 3 : 2}>{h}<FilterBtn>{i === 1 ? <SortFilter /> : <Funnel />}</FilterBtn></HeadCell>
      ));
      cells.push(<Blank key="b3" />);
    } else if (r === 4) {
      DATA.forEach((d, i) => cells.push(
        <DataCell key={`d${i}`} $pl={i === 5 ? 3 : 2} $ls={DATA_SPACING[i]} $right={i === 7} $flag={i === 1 || i === 8} $end={i === 10}>{d}</DataCell>
      ));
      cells.push(<Blank key="b4" />);
    } else {
      for (let i = 0; i < 12; i++) cells.push(<Blank key={`b${r}-${i}`} $sel={r === 16 && i === 5} />);
    }
  }
  return <Sheet>{cells}</Sheet>;
}

export default function App() {
  return (
    <Page>
      <Global />
      <TitleBar>
        <XlLogo />
        <AutoSave>AutoSave</AutoSave>
        <Toggle><Knob />Off</Toggle>
        <Slot $w={26} $l={8}><SaveIcon /></Slot>
        <Slot $w={16} $l={8}><Undo c="#444" /></Slot>
        <Slot $w={16}><Chev /></Slot>
        <Slot $w={16} $l={7}><Undo c="#aaa" flip /></Slot>
        <Slot $w={14}><Chev c="#aaa" /></Slot>
        <Slot $w={28} $l={3}><PrintPrev /></Slot>
        <Slot $w={28}><NewDoc /></Slot>
        <Slot $w={28}><Customize /></Slot>
        <DocTitle>UNBILLED REPORT AS ON 29_01_2025...&nbsp; •&nbsp; Saving...</DocTitle>
        <Slot $w={10} $l={4}><Chev /></Slot>
        <TitleSearch><Magnifier />Search</TitleSearch>
        <Avatar>MK</Avatar>
        <Slot $w={24} $l={22}><Bulb /></Slot>
        <Slot $w={24} $l={24}><WinMin /></Slot>
        <Slot $w={24} $l={24}><WinRestore /></Slot>
        <Slot $w={24} $l={24}><WinClose /></Slot>
      </TitleBar>

      <TabsRow>
        {RIBBON_TABS.map(([t, w]) => <RibbonTab key={t} $w={w} $active={t === "Home"}>{t}</RibbonTab>)}
        <RibbonTab $w={46}>Acrobat</RibbonTab>
        <Comments><CommentIco />Comments</Comments>
        <Share><ShareIco />Share<Chev c="#fff" /></Share>
      </TabsRow>

      <Ribbon>
        <Group $w={111}>
          <GroupBody>
            <BodyRows>
              <PasteCol><PasteGlyph><PasteIco /></PasteGlyph><PasteLabel>Paste</PasteLabel><PasteChev><Chev /></PasteChev></PasteCol>
              <ColStack>
                <ToolRow><Slot $w={32}><CutIco /></Slot></ToolRow>
                <ToolRow><Slot $w={32}><CopyIco /></Slot><Slot $w={8} $l={3}><Chev /></Slot></ToolRow>
                <ToolRow><Slot $w={32}><PainterIco /></Slot></ToolRow>
              </ColStack>
            </BodyRows>
          </GroupBody>
          <Foot label="Clipboard" launch />
        </Group>

        <Group $w={236}>
          <GroupBody $pl={9}>
            <ToolRow $h={42}>
              <Select $w={123}>Calibri<Chev /></Select>
              <Select $w={43} $l={2}>11<Chev /></Select>
              <Slot $w={26}><BoldGlyph $s={19}>A</BoldGlyph><GrowRow><Caret /></GrowRow></Slot>
              <Slot $w={28} $l={2}><BoldGlyph $s={16}>A</BoldGlyph><GrowRow><Caret down /></GrowRow></Slot>
            </ToolRow>
            <ToolRow $h={20}>
              <Slot $w={24}><BoldGlyph $b $s={14}>B</BoldGlyph></Slot>
              <Slot $w={28}><BoldGlyph $i $s={15}>I</BoldGlyph></Slot>
              <Slot $w={22}><BoldGlyph $u $s={13}>U</BoldGlyph></Slot>
              <Slot $w={16}><Chev /></Slot>
              <Slot $w={6}><Vert /></Slot>
              <Slot $w={22}><BorderIco /></Slot>
              <Slot $w={16}><Chev /></Slot>
              <Slot $w={6}><Vert /></Slot>
              <Slot $w={24}><FillIco /></Slot>
              <Slot $w={14}><Chev /></Slot>
              <Slot $w={28}><FontColorIco /></Slot>
              <Slot $w={10}><Chev /></Slot>
            </ToolRow>
          </GroupBody>
          <Foot label="Font" launch />
        </Group>

        <Group $w={142}>
          <GroupBody $pl={8}>
            <ToolRow>
              <Slot $w={26}><Lines rows={top} /></Slot>
              <Slot $w={26}><Lines rows={mid} /></Slot>
              <PressedSlot $w={24} $l={1}><Lines rows={bot} /></PressedSlot>
              <Slot $w={26} $l={1}><WrapIco /></Slot>
            </ToolRow>
            <ToolRow>
              <Slot $w={26}><Lines rows={left} /></Slot>
              <Slot $w={26}><Lines rows={center} /></Slot>
              <Slot $w={26}><Lines rows={right} /></Slot>
              <Slot $w={26}><MergeIco /></Slot>
              <Slot $w={20}><Chev /></Slot>
            </ToolRow>
            <ToolRow>
              <Slot $w={26}><Indent out /></Slot>
              <Slot $w={26}><Indent /></Slot>
              <Slot $w={4}><Vert /></Slot>
              <Slot $w={22} $l={5}><OrientIco /></Slot>
              <Slot $w={12} $l={1}><Chev /></Slot>
            </ToolRow>
          </GroupBody>
          <Foot label="Alignment" launch />
        </Group>

        <Group $w={107}>
          <GroupBody $pl={10}>
            <ToolRow><Select $w={89} $h={24} $pl={1}>General<Chev /></Select></ToolRow>
            <ToolRow>
              <Slot $w={22}><CurrencyIco /></Slot>
              <Slot $w={14}><Chev /></Slot>
              <Slot $w={30} $l={1}><BoldGlyph $s={20}>%</BoldGlyph></Slot>
              <Slot $w={22}><CommaIco /></Slot>
            </ToolRow>
            <ToolRow>
              <Slot $w={22}><DecPlaces /></Slot>
              <Slot $w={28}><DecPlaces more /></Slot>
            </ToolRow>
          </GroupBody>
          <Foot label="Number" launch />
        </Group>

        <Group $w={184}>
          <GroupBody $pl={12}>
            <ToolRow><CondIco /><ToolText $l={3}>Conditional Formatting</ToolText><Slot $w={12}><Chev /></Slot></ToolRow>
            <ToolRow><TableIco /><ToolText $l={3}>Format as Table</ToolText><Slot $w={12}><Chev /></Slot></ToolRow>
            <ToolRow><TableIco fill /><ToolText $l={3}>Cell Styles</ToolText><Slot $w={12}><Chev /></Slot></ToolRow>
          </GroupBody>
          <Foot label="Styles" />
        </Group>

        <Group $w={107}>
          <GroupBody $pl={10}>
            <ToolRow><CellGridIco kind="insert" /><ToolText $w={45} $l={1}>Insert</ToolText><Slot $w={12}><Chev /></Slot></ToolRow>
            <ToolRow><CellGridIco kind="delete" /><ToolText $w={48} $l={1}>Delete</ToolText><Slot $w={12}><Chev /></Slot></ToolRow>
            <ToolRow><CellGridIco kind="format" /><ToolText $w={40} $l={1}>Format</ToolText><Slot $w={12}><Chev /></Slot></ToolRow>
          </GroupBody>
          <Foot label="Cells" />
        </Group>

        <Group $w={105}>
          <GroupBody $pl={11}>
            <ToolRow>
              <Slot $w={18}><SigmaIco /></Slot><Slot $w={14} $l={7}><Chev /></Slot>
              <Slot $w={20} $l={10}><SortIco /></Slot><Slot $w={10} $l={1}><Chev /></Slot>
            </ToolRow>
            <ToolRow>
              <Slot $w={18}><FillDown /></Slot><Slot $w={12} $l={2}><Chev /></Slot>
              <Slot $w={20} $l={17}><Magnifier s={17} c="#444" /></Slot><Slot $w={10} $l={3}><Chev /></Slot>
            </ToolRow>
            <ToolRow>
              <Slot $w={18}><Eraser /></Slot><Slot $w={12} $l={2}><Chev /></Slot>
            </ToolRow>
          </GroupBody>
          <Foot label="Editing" />
        </Group>

        <Group $w={63}>
          <GroupBody>
            <BigTool $w={63}><AddinsIco /><BigText $t={5}>Add-ins</BigText></BigTool>
          </GroupBody>
          <Foot label="Add-ins" />
        </Group>

        <Group $w={62}>
          <GroupBody>
            <BigTool $w={62}><AnalyzeIco /><BigText $t={5}>Analyze<br />Data</BigText></BigTool>
          </GroupBody>
        </Group>

        <Group $w={139}>
          <GroupBody>
            <BigRow>
              <BigTool $w={60}><PdfGlyph><PdfIco /></PdfGlyph><BigText>Create<br />a PDF</BigText></BigTool>
              <BigTool $w={64}><PdfGlyph><PdfIco /></PdfGlyph><BigText>Create a PDF<br />and Share link</BigText></BigTool>
            </BigRow>
          </GroupBody>
          <Foot label="Adobe Acrobat" />
        </Group>

        <Collapse><svg width="11" height="6" viewBox="0 0 11 6" fill="none" stroke="#444"><path d="m.5 5.500 5-5 5 5" /></svg></Collapse>
      </Ribbon>

      <FormulaBar>
        <FieldBox $w={100} $l={9}><NameText>F16</NameText><Slot $w={20}><Chev /></Slot></FieldBox>
        <Slot $w={22}><Dots /></Slot>
        <FieldBox $w={84} $l={0}><Slot $w={26}><XMark /></Slot><Slot $w={22}><Check /></Slot><Slot $w={20} $l={2}><FxText>fx</FxText></Slot><Slot $w={12}><Chev c="#888" /></Slot></FieldBox>
        <FormulaInput $w={1136} $l={6}><Chev /></FormulaInput>
      </FormulaBar>

      <SheetWrap>
        <SheetGrid />
        <VScroll>
          <TriV up />
          <VThumb />
          <VArrowEnd><TriV /></VArrowEnd>
        </VScroll>
      </SheetWrap>

      <TabBar>
        <NavArrow left />
        <Slot $w={7} $l={27}><NavArrow /></Slot>
        <SheetTab $w={72} $l={40} $pl={3} $sep>Detail1</SheetTab>
        <SheetTab $w={70} $sep>Detail2</SheetTab>
        <SheetTab $w={70}>Detail3</SheetTab>
        <ActiveTab>Detail4<ActiveLine /></ActiveTab>
        <SheetTab $w={122} $sep $sepL>Unbilled report</SheetTab>
        <SheetTab $w={65} $pl={2} $sep>sheet1</SheetTab>
        <Slot $w={13} $l={41}><Plus /></Slot>
        <Slot $w={4} $l={190}><Dots /></Slot>
        <HScroll>
          <TriH left />
          <HThumb />
          <HEnd><TriH /></HEnd>
        </HScroll>
      </TabBar>

      <StatusBar>
        <Ready>Ready</Ready>
        <A11yIco />
        <A11y>Accessibility: Investigate</A11y>
        <ViewBtn $on><GridView /></ViewBtn>
        <ViewBtn><PageView /></ViewBtn>
        <ViewBtn><BreakView /></ViewBtn>
        <Slot $w={8} $l={6}><Minus /></Slot>
        <Slot $w={100} $l={5}><SliderTrack><SliderThumb /></SliderTrack></Slot>
        <Slot $w={9} $l={5}><PlusSm /></Slot>
        <Percent>100%</Percent>
      </StatusBar>

      <Taskbar>
        <Weather><SunIco /><Badge>1</Badge></Weather>
        <WeatherText>21°C<WeatherSub>Sunny</WeatherSub></WeatherText>
        <WinLogo />
        <WinSearch><SearchDark /><SearchGrow>Search</SearchGrow><Gift /></WinSearch>
        <Slot $w={24} $l={13}><TaskView /></Slot>
        <TaskIcon $l={10}><Edge /></TaskIcon>
        <TaskIcon><RemoteIco /></TaskIcon>
        <TaskIcon $dot><Folder /></TaskIcon>
        <TaskIcon><Store /></TaskIcon>
        <TaskIcon $dot><FaWhatsapp size={26} color="#128c5e" /></TaskIcon>
        <TaskIcon $dot><Chrome /></TaskIcon>
        <TaskIcon $active><XlLogo s={24} /></TaskIcon>
        <Slot $w={12} $l={128}><Up /></Slot>
        <Slot $w={17} $l={18}><CloudIco /></Slot>
        <TrayText>ENG<br />IN</TrayText>
        <Slot $w={16} $l={16}><NetIco /></Slot>
        <Slot $w={16} $l={7}><SoundIco /></Slot>
        <Clock>11:29 AM<br />30-01-2025</Clock>
      </Taskbar>
    </Page>
  );
}
